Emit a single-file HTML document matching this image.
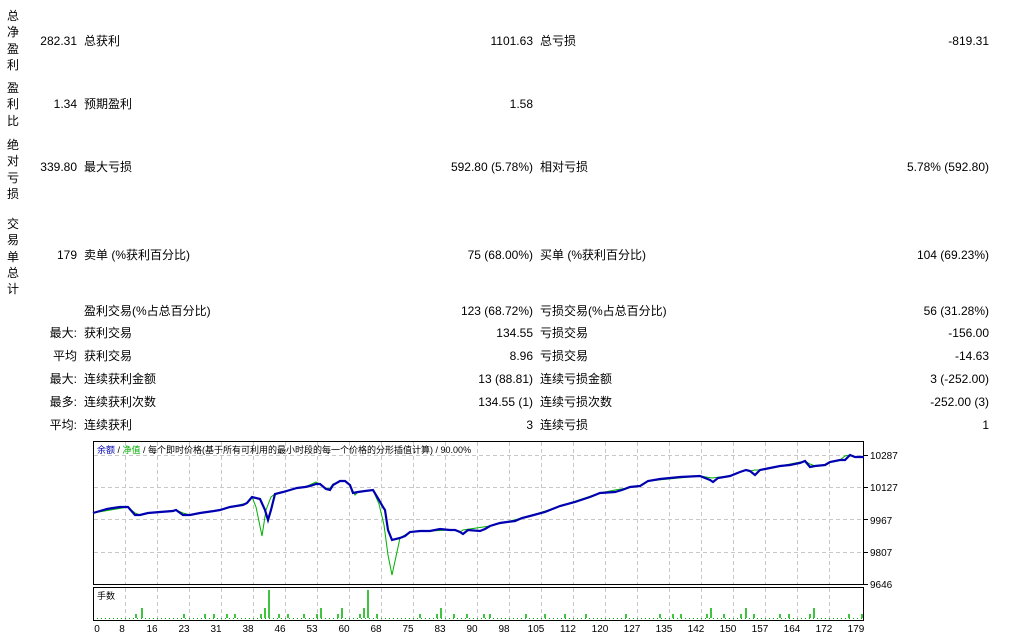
<!DOCTYPE html>
<html><head><meta charset="utf-8"><style>
body{margin:0;width:1017px;height:641px;background:#fff;position:relative;overflow:hidden;font-family:"Liberation Sans","Noto Sans CJK SC",sans-serif;font-size:12px;color:#000}
.t{position:absolute;white-space:nowrap;line-height:14px}
.r{text-align:right}
.v{position:absolute;left:7px;width:14px;line-height:16.3px;font-size:12px}
</style></head><body>
<div class="v" style="top:8px">总<br>净<br>盈<br>利</div>
<div class="v" style="top:80px">盈<br>利<br>比</div>
<div class="v" style="top:137px">绝<br>对<br>亏<br>损</div>
<div class="v" style="top:216px">交<br>易<br>单<br>总<br>计</div>

<div class="t r" style="right:940px;top:34px">282.31</div><div class="t" style="left:84px;top:34px">总获利</div><div class="t r" style="right:484px;top:34px">1101.63</div><div class="t" style="left:540px;top:34px">总亏损</div><div class="t r" style="right:28px;top:34px">-819.31</div>
<div class="t r" style="right:940px;top:97px">1.34</div><div class="t" style="left:84px;top:97px">预期盈利</div><div class="t r" style="right:484px;top:97px">1.58</div>
<div class="t r" style="right:940px;top:160px">339.80</div><div class="t" style="left:84px;top:160px">最大亏损</div><div class="t r" style="right:484px;top:160px">592.80 (5.78%)</div><div class="t" style="left:540px;top:160px">相对亏损</div><div class="t r" style="right:28px;top:160px">5.78% (592.80)</div>
<div class="t r" style="right:940px;top:248px">179</div><div class="t" style="left:84px;top:248px">卖单 (%获利百分比)</div><div class="t r" style="right:484px;top:248px">75 (68.00%)</div><div class="t" style="left:540px;top:248px">买单 (%获利百分比)</div><div class="t r" style="right:28px;top:248px">104 (69.23%)</div>
<div class="t" style="left:84px;top:304px">盈利交易(%占总百分比)</div><div class="t r" style="right:484px;top:304px">123 (68.72%)</div><div class="t" style="left:540px;top:304px">亏损交易(%占总百分比)</div><div class="t r" style="right:28px;top:304px">56 (31.28%)</div>
<div class="t r" style="right:940px;top:326px">最大:</div><div class="t" style="left:84px;top:326px">获利交易</div><div class="t r" style="right:484px;top:326px">134.55</div><div class="t" style="left:540px;top:326px">亏损交易</div><div class="t r" style="right:28px;top:326px">-156.00</div>
<div class="t r" style="right:940px;top:349px">平均</div><div class="t" style="left:84px;top:349px">获利交易</div><div class="t r" style="right:484px;top:349px">8.96</div><div class="t" style="left:540px;top:349px">亏损交易</div><div class="t r" style="right:28px;top:349px">-14.63</div>
<div class="t r" style="right:940px;top:372px">最大:</div><div class="t" style="left:84px;top:372px">连续获利金额</div><div class="t r" style="right:484px;top:372px">13 (88.81)</div><div class="t" style="left:540px;top:372px">连续亏损金额</div><div class="t r" style="right:28px;top:372px">3 (-252.00)</div>
<div class="t r" style="right:940px;top:395px">最多:</div><div class="t" style="left:84px;top:395px">连续获利次数</div><div class="t r" style="right:484px;top:395px">134.55 (1)</div><div class="t" style="left:540px;top:395px">连续亏损次数</div><div class="t r" style="right:28px;top:395px">-252.00 (3)</div>
<div class="t r" style="right:940px;top:418px">平均:</div><div class="t" style="left:84px;top:418px">连续获利</div><div class="t r" style="right:484px;top:418px">3</div><div class="t" style="left:540px;top:418px">连续亏损</div><div class="t r" style="right:28px;top:418px">1</div>

<svg style="position:absolute;left:0;top:0" width="1017" height="641">
<g stroke="#c8c8c8" stroke-dasharray="4,3" stroke-width="1" fill="none">
<line x1="94" y1="455.5" x2="863" y2="455.5"/><line x1="94" y1="487.5" x2="863" y2="487.5"/><line x1="94" y1="519.5" x2="863" y2="519.5"/><line x1="94" y1="552.5" x2="863" y2="552.5"/>
<path d="M125.5 442V584M157.5 442V584M189.5 442V584M221.5 442V584M253.5 442V584M285.5 442V584M317.5 442V584M349.5 442V584M381.5 442V584M413.5 442V584M445.5 442V584M477.5 442V584M509.5 442V584M541.5 442V584M573.5 442V584M605.5 442V584M637.5 442V584M669.5 442V584M701.5 442V584M733.5 442V584M765.5 442V584M797.5 442V584M829.5 442V584"/>
<path d="M125.5 588V620M157.5 588V620M189.5 588V620M221.5 588V620M253.5 588V620M285.5 588V620M317.5 588V620M349.5 588V620M381.5 588V620M413.5 588V620M445.5 588V620M477.5 588V620M509.5 588V620M541.5 588V620M573.5 588V620M605.5 588V620M637.5 588V620M669.5 588V620M701.5 588V620M733.5 588V620M765.5 588V620M797.5 588V620M829.5 588V620"/>
</g>
<rect x="93.5" y="441.5" width="770" height="143" fill="none" stroke="#000"/>
<rect x="93.5" y="587.5" width="770" height="33" fill="none" stroke="#000"/>
<g stroke="#000"><line x1="864" y1="455.5" x2="868" y2="455.5"/><line x1="864" y1="487.5" x2="868" y2="487.5"/><line x1="864" y1="519.5" x2="868" y2="519.5"/><line x1="864" y1="552.5" x2="868" y2="552.5"/><line x1="864" y1="584.5" x2="868" y2="584.5"/></g>
<polyline fill="none" stroke="#00b000" stroke-width="1" points="93,513 128,507 135,513 140,515 148,513 176,510 183,513 190,515 214,511 230,507 247,503 252,497 256,507 262,536 266,510 271,497 275,494 283,492 297,488 305,487 316,482 320,484 326,489 330,488 333,484 340,481 345,481 350,485 355,495 358,492 373,490 379,504 384,525 388,555 392,575 400,538 410,532 450,530 455,530 460,532 463,530 490,526 530,516 600,493 615,490 640,486 648,481 700,476 712,478 720,477 730,476 740,472 746,470 750,471 755,470 760,470 805,461 810,464 815,466 825,465 830,462 840,460 845,456 850,455 855,457 864,457"/>
<polyline fill="none" stroke="#0000b0" stroke-width="2.2" points="93,513 100,511 107,509 113,508 120,507 128,507 135,515 140,515 148,513 160,512 173,511 176,510 183,515 190,515 200,513 214,511 220,510 230,507 243,505 247,503 252,497 260,499 265,510 268,520 271,510 275,494 283,492 290,490 297,488 305,487 310,486 316,484 320,484 326,489 330,490 333,485 340,481 345,481 350,485 353,493 358,492 365,491 373,490 379,500 383,507 385,510 388,530 392,540 400,538 405,536 410,532 420,531 430,531 440,529 450,530 455,530 460,532 463,534 468,530 480,531 485,529 490,526 500,523 507,522 515,521 522,518 530,516 545,512 560,506 575,502 590,497 600,493 615,492 622,490 630,487 640,486 648,481 660,479 680,477 700,476 710,480 713,482 718,478 730,476 740,472 746,470 750,471 755,475 760,470 765,469 770,468 780,466 790,465 800,463 805,461 810,467 815,466 825,465 830,462 840,460 845,460 850,455 855,457 864,457"/>
<line x1="97" y1="618.5" x2="862" y2="618.5" stroke="#00b000" stroke-dasharray="1,3"/>
<g stroke="#00b000" stroke-width="1.5">
<line x1="136" y1="618" x2="136" y2="614"/><line x1="142" y1="618" x2="142" y2="608"/><line x1="184" y1="618" x2="184" y2="614"/><line x1="205" y1="618" x2="205" y2="614"/><line x1="214" y1="618" x2="214" y2="614"/><line x1="227" y1="618" x2="227" y2="614"/><line x1="235" y1="618" x2="235" y2="614"/><line x1="261" y1="618" x2="261" y2="614"/><line x1="265" y1="618" x2="265" y2="608"/><line x1="269" y1="618" x2="269" y2="590"/><line x1="279" y1="618" x2="279" y2="614"/><line x1="288" y1="618" x2="288" y2="614"/><line x1="304" y1="618" x2="304" y2="614"/><line x1="317" y1="618" x2="317" y2="614"/><line x1="321" y1="618" x2="321" y2="608"/><line x1="338" y1="618" x2="338" y2="614"/><line x1="342" y1="618" x2="342" y2="608"/><line x1="360" y1="618" x2="360" y2="614"/><line x1="364" y1="618" x2="364" y2="608"/><line x1="368" y1="618" x2="368" y2="590"/><line x1="377" y1="618" x2="377" y2="614"/><line x1="420" y1="618" x2="420" y2="614"/><line x1="437" y1="618" x2="437" y2="614"/><line x1="441" y1="618" x2="441" y2="608"/><line x1="454" y1="618" x2="454" y2="614"/><line x1="467" y1="618" x2="467" y2="614"/><line x1="484" y1="618" x2="484" y2="614"/><line x1="490" y1="618" x2="490" y2="614"/><line x1="526" y1="618" x2="526" y2="614"/><line x1="545" y1="618" x2="545" y2="614"/><line x1="565" y1="618" x2="565" y2="614"/><line x1="586" y1="618" x2="586" y2="614"/><line x1="626" y1="618" x2="626" y2="614"/><line x1="660" y1="618" x2="660" y2="614"/><line x1="673" y1="618" x2="673" y2="614"/><line x1="681" y1="618" x2="681" y2="614"/><line x1="707" y1="618" x2="707" y2="614"/><line x1="711" y1="618" x2="711" y2="608"/><line x1="724" y1="618" x2="724" y2="614"/><line x1="741" y1="618" x2="741" y2="614"/><line x1="746" y1="618" x2="746" y2="608"/><line x1="754" y1="618" x2="754" y2="614"/><line x1="780" y1="618" x2="780" y2="614"/><line x1="789" y1="618" x2="789" y2="614"/><line x1="810" y1="618" x2="810" y2="614"/><line x1="814" y1="618" x2="814" y2="608"/><line x1="849" y1="618" x2="849" y2="614"/><line x1="862" y1="618" x2="862" y2="614"/>
</g>
<g font-family="Liberation Sans, sans-serif" font-size="10" fill="#000">
<text x="870" y="459">10287</text><text x="870" y="491">10127</text><text x="870" y="524">9967</text><text x="870" y="556">9807</text><text x="870" y="588">9646</text>
</g>
<g font-family="Liberation Sans, sans-serif" font-size="10" fill="#000" text-anchor="middle">
<text x="97" y="632">0</text><text x="122" y="632">8</text><text x="152" y="632">16</text><text x="184" y="632">23</text><text x="216" y="632">31</text><text x="248" y="632">38</text><text x="280" y="632">46</text><text x="312" y="632">53</text><text x="344" y="632">60</text><text x="376" y="632">68</text><text x="408" y="632">75</text><text x="440" y="632">83</text><text x="472" y="632">90</text><text x="504" y="632">98</text><text x="536" y="632">105</text><text x="568" y="632">112</text><text x="600" y="632">120</text><text x="632" y="632">127</text><text x="664" y="632">135</text><text x="696" y="632">142</text><text x="728" y="632">150</text><text x="760" y="632">157</text><text x="792" y="632">164</text><text x="824" y="632">172</text><text x="856" y="632">179</text>
</g>
<text x="97" y="453" font-family="Liberation Sans, Noto Sans CJK SC, sans-serif" font-size="9"><tspan fill="#0000b0">余额</tspan> / <tspan fill="#00b000">净值</tspan> / 每个即时价格(基于所有可利用的最小时段的每一个价格的分形插值计算) / 90.00%</text>
<text x="97" y="599" font-family="Liberation Sans, Noto Sans CJK SC, sans-serif" font-size="9">手数</text>
</svg>
</body></html>
